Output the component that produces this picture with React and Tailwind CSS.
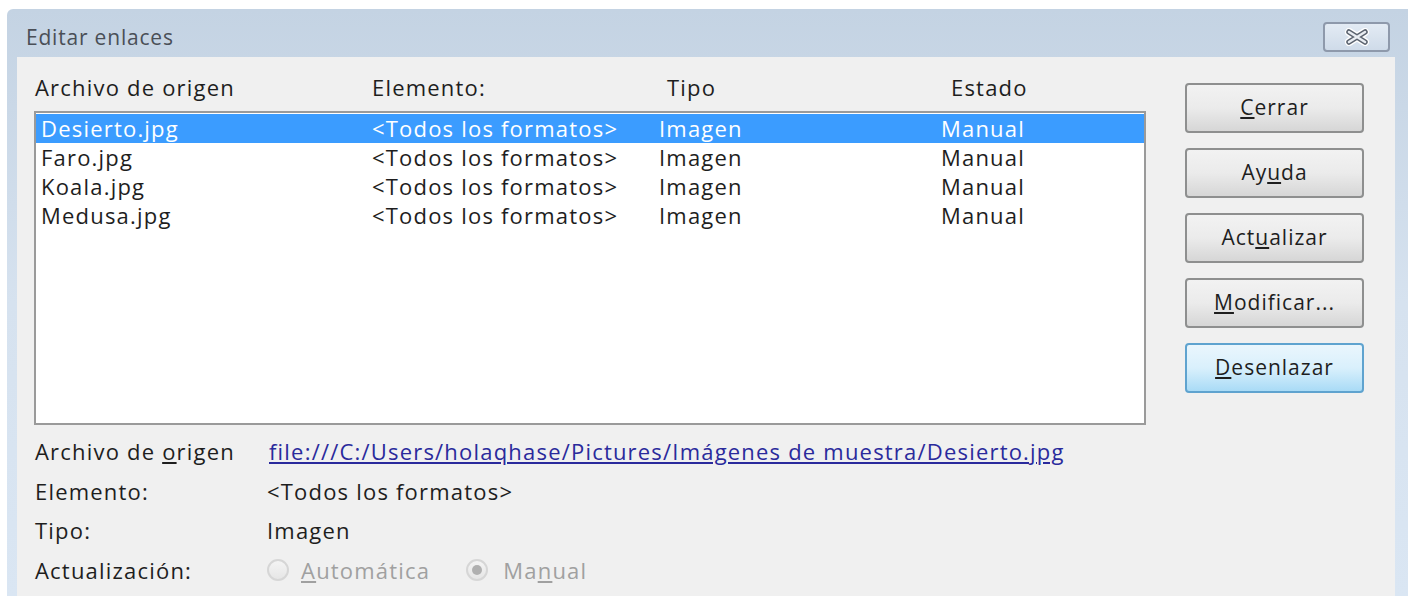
import React from "react";

const font = { fontFamily: '"Open Sans", "Noto Sans", sans-serif' };

const rows = [
  { file: "Desierto.jpg", sel: true },
  { file: "Faro.jpg" },
  { file: "Koala.jpg" },
  { file: "Medusa.jpg" },
];

function Btn({ children, active }) {
  return (
    <div
      className={
        "h-[50px] w-[179px] rounded-[4px] border-2 flex items-center justify-center text-[21px] tracking-[1px] text-[#1e1e1e] " +
        (active
          ? "border-[#5fa3cf] bg-gradient-to-b from-[#eaf6fd] via-[#d9f0fc] to-[#a9dbf6]"
          : "border-[#8e8f8f] bg-gradient-to-b from-[#f2f2f2] via-[#ebebeb] to-[#d6d6d6]")
      }
    >
      {children}
    </div>
  );
}

function Radio({ checked }) {
  return (
    <span className="w-[22px] h-[22px] rounded-full border-2 border-[#d6d6d6] bg-gradient-to-b from-[#f4f4f4] to-[#e6e6e6] flex items-center justify-center">
      {checked && <span className="w-[10px] h-[10px] rounded-full bg-[#b0b0b0]" />}
    </span>
  );
}

export default function App() {
  return (
    <div className="w-[1408px] h-[596px] bg-white pt-[9px] pl-[7px] overflow-hidden" style={font}>
      <div className="h-[587px] flex flex-col bg-gradient-to-b from-[#c4d3e3] via-[#d6e2ef] to-[#dae6f3] rounded-tl-[6px]">
        {/* title bar */}
        <div className="h-[48px] flex items-start justify-between shrink-0">
          <div className="pl-[19px] pt-[13px] text-[21px] tracking-[0.8px] leading-[30px] text-[#4a4f57]">Editar enlaces</div>
          <div className="mt-[13px] mr-[18px] w-[67px] h-[30px] rounded-[4px] border-2 border-[#8e99ab] bg-gradient-to-b from-[#e3ebf4] to-[#cfdbe9] flex items-center justify-center">
            <svg width="30" height="18" viewBox="0 0 30 18">
              <path d="M7 4 L23 14 M23 4 L7 14" stroke="#ffffff" strokeWidth="8" strokeLinecap="round" />
              <path d="M7 4 L23 14 M23 4 L7 14" stroke="#5c6470" strokeWidth="5.5" strokeLinecap="round" />
              <path d="M7 4 L23 14 M23 4 L7 14" stroke="#e9edf2" strokeWidth="2.5" strokeLinecap="round" />
            </svg>
          </div>
        </div>
        {/* client area */}
        <div className="flex-1 ml-[10px] mr-[13px] bg-[#f0f0f0] flex text-[#1e1e1e] text-[22px] tracking-[1.2px]">
          <div className="ml-[17px] w-[1112px] flex flex-col">
            <div className="h-[54px] pt-[15px] flex leading-[30px]">
              <span className="w-[337px] pl-[1px]">Archivo de origen</span>
              <span className="w-[296px] pl-[1px]">Elemento:</span>
              <span className="w-[284px]">Tipo</span>
              <span>Estado</span>
            </div>
            <div className="h-[314px] border-2 border-[#9a9a9a] bg-white pt-[1px]">
              {rows.map((r) => (
                <div
                  key={r.file}
                  className={"h-[29px] flex items-center leading-[29px] " + (r.sel ? "bg-[#3b9cff] text-white" : "")}
                >
                  <span className="w-[336px] pl-[5px]">{r.file}</span>
                  <span className="w-[287px]">&lt;Todos los formatos&gt;</span>
                  <span className="w-[282px]">Imagen</span>
                  <span>Manual</span>
                </div>
              ))}
            </div>
            <div className="mt-[6px] flex flex-col">
              <div className="h-[40px] flex items-center">
                <span className="w-[235px] pl-[1px]">
                  Archivo de <u>o</u>rigen
                </span>
                <span className="underline text-[#2a2a9c]">
                  file:///C:/Users/holaqhase/Pictures/Imágenes de muestra/Desierto.jpg
                </span>
              </div>
              <div className="h-[40px] flex items-center">
                <span className="w-[233px] pl-[1px]">Elemento:</span>
                <span>&lt;Todos los formatos&gt;</span>
              </div>
              <div className="h-[39px] flex items-center">
                <span className="w-[233px] pl-[1px]">Tipo:</span>
                <span>Imagen</span>
              </div>
              <div className="h-[40px] flex items-center">
                <span className="w-[233px] pl-[1px]">Actualización:</span>
                <span className="flex items-center gap-[12px] text-[#a0a0a0]">
                  <Radio />
                  <span>
                    <u>A</u>utomática
                  </span>
                </span>
                <span className="ml-[36px] flex items-center gap-[15px] text-[#a0a0a0]">
                  <Radio checked />
                  <span>
                    Ma<u>n</u>ual
                  </span>
                </span>
              </div>
            </div>
          </div>
          <div className="ml-[39px] pt-[26px] flex flex-col gap-[15px]">
            <Btn>
              <u>C</u>errar
            </Btn>
            <Btn>
              Ay<u>u</u>da
            </Btn>
            <Btn>
              Act<u>u</u>alizar
            </Btn>
            <Btn>
              <u>M</u>odificar...
            </Btn>
            <Btn active>
              <u>D</u>esenlazar
            </Btn>
          </div>
        </div>
      </div>
    </div>
  );
}
